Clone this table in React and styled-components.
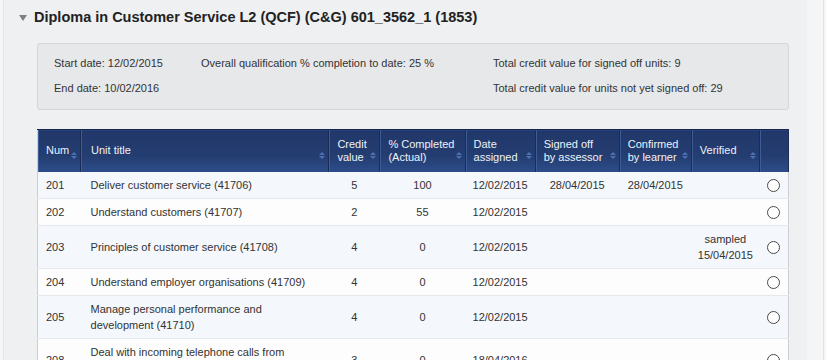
import React from "react";
import styled, { createGlobalStyle } from "styled-components";

const GlobalStyle = createGlobalStyle`
  html, body { margin: 0; padding: 0; }
  *, *::before, *::after { box-sizing: border-box; }
  body {
    background: #f5f5f5;
    font-family: "Liberation Sans", Arial, sans-serif;
    color: #333;
  }
`;

const Page = styled.div`
  width: 824px;
  min-height: 100vh;
  border-right: 1px solid #e3e3e3;
  display: flex;
`;

const Panel = styled.div`
  margin-left: 3px;
  width: 804px;
  min-height: 100vh;
  background: #eff0f1;
  border-left: 1px solid #e6e7e8;
  padding: 8px 18px 0 15px;
`;

const TitleRow = styled.div`
  display: flex;
  align-items: center;
  gap: 7px;
  height: 18px;
`;

const Caret = styled.span`
  width: 0;
  height: 0;
  border-left: 4px solid transparent;
  border-right: 4px solid transparent;
  border-top: 6px solid #7f7f7f;
  margin-top: 2px;
`;

const Title = styled.h2`
  margin: 0;
  font-size: 14.5px;
  line-height: 18px;
  font-weight: bold;
  color: #222;
`;

const Body = styled.div`
  margin-left: 18px;
`;

const InfoBox = styled.div`
  margin-top: 17px;
  background: #e7e8ea;
  border: 1px solid #d5d6d8;
  border-radius: 3px;
  padding: 13px 16px 14px;
  display: grid;
  grid-template-columns: 147px 292px 1fr;
  row-gap: 12px;
  font-size: 11px;
  line-height: 13px;
  color: #333;
`;

const Table = styled.table`
  margin-top: 19px;
  width: 752px;
  border-collapse: collapse;
  table-layout: fixed;
  border: 1px solid #cdced0;
  font-size: 11px;
`;

const HeadCell = styled.th`
  height: 42px;
  padding: 0 3px 0 ${(p) => p.$pl || "8px"};
  background: linear-gradient(#21376a 0%, #243d70 60%, #2c4d8b 100%);
  color: #eef2f9;
  font-weight: normal;
  text-align: left;
  line-height: 13px;
  border-right: 1px solid #1b2d57;
  box-shadow: inset 1px 0 0 #3d5c96;
  border-top: 1px solid #16264a;
  vertical-align: middle;
`;

const HeadInner = styled.div`
  display: flex;
  justify-content: space-between;
  align-items: center;
`;

const Sort = styled.span`
  display: flex;
  flex-direction: column;
  gap: 1px;
  margin-top: 9px;
  flex: none;
  &::before, &::after {
    content: "";
    width: 0;
    height: 0;
    border-left: 3.5px solid transparent;
    border-right: 3.5px solid transparent;
  }
  &::before { border-bottom: 3.5px solid #4e71b4; }
  &::after { border-top: 3.5px solid #4e71b4; }
`;

const Row = styled.tr`
  background: ${(p) => (p.$alt ? "#fdfdfd" : "#f4f7fb")};
`;

const Cell = styled.td`
  padding: 5px ${(p) => (p.$center ? "2px" : "8px")} 5px ${(p) => (p.$center ? "2px" : p.$pl || "8px")};
  line-height: 16px;
  color: #333;
  text-align: ${(p) => (p.$center ? "center" : "left")};
  vertical-align: middle;
  border-bottom: 1px solid #e4e7eb;
  white-space: ${(p) => (p.$nowrap ? "nowrap" : "normal")};
`;

const Radio = styled.input.attrs({ type: "radio" })`
  appearance: none;
  -webkit-appearance: none;
  width: 13px;
  height: 13px;
  margin: 0 0 1px;
  border: 1px solid #4a4a4a;
  border-radius: 50%;
  background: #fff;
  vertical-align: middle;
  display: inline-block;
`;

const cols = [
  { label: "Num", w: 43 },
  { label: "Unit title", w: 248, pl: "10px" },
  { label: ["Credit", "value"], w: 51 },
  { label: ["% Completed", "(Actual)"], w: 85 },
  { label: ["Date", "assigned"], w: 70 },
  { label: ["Signed off", "by assessor"], w: 84 },
  { label: ["Confirmed", "by learner"], w: 72 },
  { label: "Verified", w: 68 },
  { label: "", w: 29, nosort: true },
];

const rows = [
  ["201", "Deliver customer service (41706)", "5", "100", "12/02/2015", "28/04/2015", "28/04/2015", ""],
  ["202", "Understand customers (41707)", "2", "55", "12/02/2015", "", "", ""],
  ["203", "Principles of customer service (41708)", "4", "0", "12/02/2015", "", "", ["sampled", "15/04/2015"]],
  ["204", "Understand employer organisations (41709)", "4", "0", "12/02/2015", "", "", ""],
  ["205", "Manage personal performance and development (41710)", "4", "0", "12/02/2015", "", "", ""],
  ["208", "Deal with incoming telephone calls from customers (41715)", "3", "0", "18/04/2016", "", "", ""],
];

const lines = (v) =>
  Array.isArray(v)
    ? v.map((t, i) => (
        <React.Fragment key={i}>
          {i > 0 && <br />}
          {t}
        </React.Fragment>
      ))
    : v;

export default function App() {
  return (
    <>
      <GlobalStyle />
      <Page>
        <Panel>
          <TitleRow>
            <Caret />
            <Title>Diploma in Customer Service L2 (QCF) (C&amp;G) 601_3562_1 (1853)</Title>
          </TitleRow>
          <Body>
            <InfoBox>
              <div>Start date: 12/02/2015</div>
              <div>Overall qualification % completion to date: 25 %</div>
              <div>Total credit value for signed off units: 9</div>
              <div>End date: 10/02/2016</div>
              <div />
              <div>Total credit value for units not yet signed off: 29</div>
            </InfoBox>
            <Table>
              <colgroup>
                {cols.map((c, i) => (
                  <col key={i} style={{ width: c.w }} />
                ))}
              </colgroup>
              <thead>
                <tr>
                  {cols.map((c, i) => (
                    <HeadCell key={i} $pl={c.pl}>
                      <HeadInner>
                        <span>{lines(c.label)}</span>
                        {!c.nosort && <Sort />}
                      </HeadInner>
                    </HeadCell>
                  ))}
                </tr>
              </thead>
              <tbody>
                {rows.map((r, i) => (
                  <Row key={r[0]} $alt={i % 2 === 1}>
                    <Cell>{r[0]}</Cell>
                    <Cell $pl="10px">{r[1]}</Cell>
                    <Cell $center>{r[2]}</Cell>
                    <Cell $center>{r[3]}</Cell>
                    <Cell $center $nowrap>{r[4]}</Cell>
                    <Cell $center $nowrap>{r[5]}</Cell>
                    <Cell $center $nowrap>{r[6]}</Cell>
                    <Cell $center $nowrap>{lines(r[7])}</Cell>
                    <Cell $center>
                      <Radio name="unit" />
                    </Cell>
                  </Row>
                ))}
              </tbody>
            </Table>
          </Body>
        </Panel>
      </Page>
    </>
  );
}
